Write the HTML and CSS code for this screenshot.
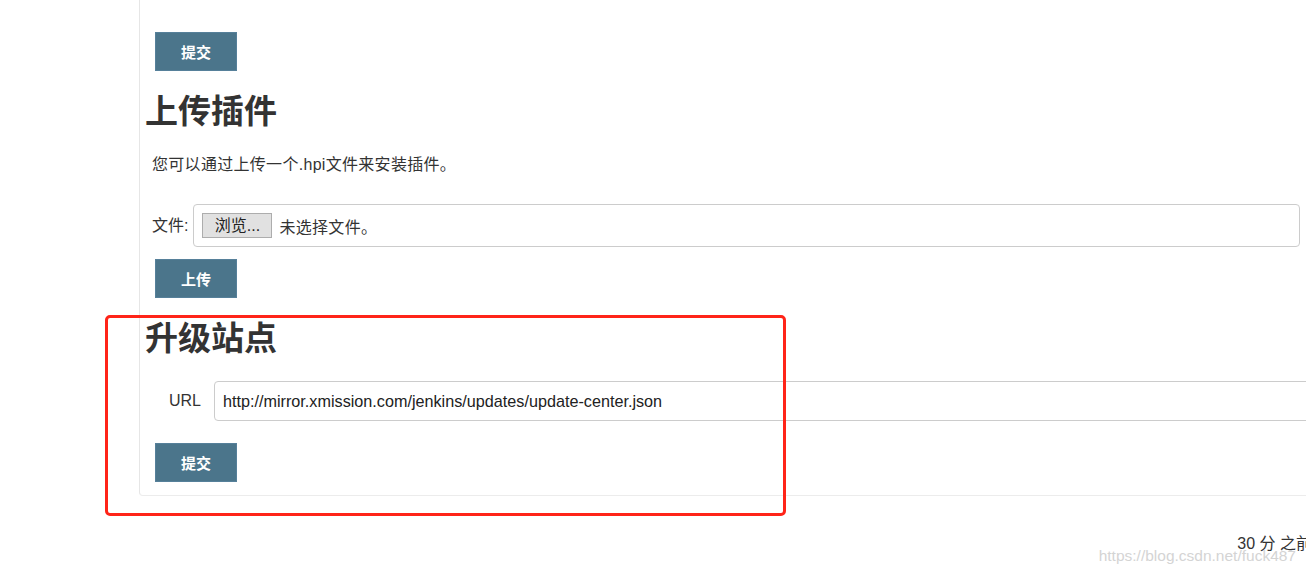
FILE: index.html
```html
<!DOCTYPE html>
<html lang="zh-CN">
<head>
<meta charset="utf-8">
<title>插件管理 - 高级</title>
<link rel="stylesheet" href="styles.css">
</head>
<body>
<div class="layout">
  <aside class="sidebar"></aside>
  <main class="panel">
    <button class="btn" type="button">提交</button>
    <h2 class="title">上传插件</h2>
    <p class="desc">您可以通过上传一个.hpi文件来安装插件。</p>
    <div class="file-row">
      <span class="label">文件:</span>
      <div class="file-box">
        <span class="browse">浏览...</span>
        <span class="file-name">未选择文件。</span>
      </div>
    </div>
    <button class="btn btn-upload" type="button">上传</button>
    <h2 class="title">升级站点</h2>
    <div class="url-row">
      <span class="label">URL</span>
      <input class="url-input" type="text" value="http://mirror.xmission.com/jenkins/updates/update-center.json">
    </div>
    <button class="btn btn-submit" type="button">提交</button>
  </main>
</div>
<footer class="footer"><span class="ago">30 分 之前</span></footer>
<div class="watermark">https://blog.csdn.net/fuck487</div>
<div class="annotation"></div>
</body>
</html>
```

FILE: styles.css
```css
html, body {
  margin: 0;
  padding: 0;
  background: #fff;
}
body {
  overflow: hidden;
  font-family: "Liberation Sans", "Noto Sans CJK SC", sans-serif;
  color: #333;
  font-size: 16px;
}
.layout {
  display: flex;
}
.sidebar {
  flex: none;
  width: 139px;
}
.panel {
  flex: 1;
  min-width: 0;
  border-left: 1px solid #e6e6e6;
  border-bottom: 1px solid #ececec;
  border-bottom-left-radius: 4px;
  padding: 32px 6px 13px 12px;
}
.btn {
  display: block;
  box-sizing: border-box;
  width: 82px;
  height: 39px;
  margin: 0 0 0 3px;
  padding: 0;
  background: #4b758b;
  border: 1px solid #56809a;
  color: #fff;
  font-family: "Liberation Sans", "Noto Sans CJK SC", sans-serif;
  font-size: 15px;
  font-weight: 700;
  cursor: pointer;
}
.btn-upload {
  margin-top: 12px;
}
.btn-submit {
  margin-top: 22px;
}
.title {
  margin: 21px 0 0 -7px;
  font-size: 33px;
  line-height: 40px;
  font-weight: 700;
  color: #333;
}
.desc {
  margin: 21px 0 0;
  font-size: 16px;
  line-height: 24px;
  letter-spacing: 0.3px;
}
.file-row {
  margin-top: 27px;
  display: flex;
  align-items: center;
  gap: 5px;
}
.label {
  font-size: 16px;
  line-height: 20px;
  white-space: nowrap;
}
.file-box {
  flex: 1;
  box-sizing: border-box;
  height: 43px;
  border: 1px solid #ccc;
  border-radius: 4px;
  padding: 0 8px;
  display: flex;
  align-items: center;
  gap: 7px;
}
.browse {
  box-sizing: border-box;
  width: 70px;
  height: 25px;
  line-height: 23px;
  text-align: center;
  background: #e1e1e1;
  border: 1px solid #adadad;
  color: #222;
  font-size: 16px;
}
.file-name {
  font-size: 16px;
  color: #333;
  letter-spacing: 0.3px;
}
.url-row {
  margin-top: 22px;
  padding-left: 17px;
  display: flex;
  align-items: center;
  gap: 13px;
}
.url-input {
  flex: none;
  box-sizing: border-box;
  width: 1110px;
  height: 40px;
  margin: 0;
  padding: 0 8px;
  border: 1px solid #ccc;
  border-radius: 4px;
  font-family: "Liberation Sans", "Noto Sans CJK SC", sans-serif;
  font-size: 16.2px;
  color: #222;
  outline: none;
}
.footer {
  display: flex;
  justify-content: flex-end;
  margin: 38px -6px 0 0;
  font-size: 16px;
  line-height: 20px;
  white-space: nowrap;
  color: #333;
}
.watermark {
  position: absolute;
  right: 10px;
  top: 546px;
  font-size: 15.5px;
  line-height: 20px;
  color: #d4d4d4;
  white-space: nowrap;
  pointer-events: none;
}
.annotation {
  position: absolute;
  left: 105px;
  top: 315px;
  width: 681px;
  height: 201px;
  box-sizing: border-box;
  border: 3px solid #ff2418;
  border-radius: 5px;
  pointer-events: none;
}
```
